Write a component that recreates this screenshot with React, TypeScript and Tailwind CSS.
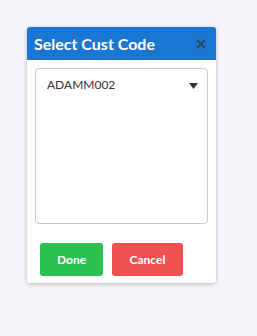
import { X } from "lucide-react";

export default function App() {
  return (
    <div
      className="w-[257px] h-[336px] bg-[#f4f5f9] pt-[27px] pl-[27px]"
      style={{ fontFamily: "Lato, 'Open Sans', sans-serif" }}
    >
      <div className="w-[189px] bg-white rounded-[3px] shadow-[0_1px_4px_rgba(0,0,0,0.25)] overflow-hidden">
        <div className="h-[33px] bg-[#1976d2] flex items-center justify-between pl-[7px] pr-[8px]">
          <span className="text-white font-bold text-[16px] leading-none">Select Cust Code</span>
          <X className="w-[14px] h-[14px] text-[#34465a]" strokeWidth={3.2} />
        </div>
        <div className="px-[8px] pt-[8px]">
          <div className="h-[156px] border border-[#c8c8c8] rounded-[4px] flex items-start justify-between pl-[11px] pr-[9px] pt-[8px]">
            <span className="text-[12px] text-[#333] leading-[16px]">ADAMM002</span>
            <svg width="9" height="7" viewBox="0 0 9 7" className="mt-[6px]">
              <path d="M0 0h9L4.5 6z" fill="#333" />
            </svg>
          </div>
        </div>
        <div className="flex gap-[9px] pl-[13px] pt-[19px] pb-[7px]">
          <button className="w-[63px] h-[33px] bg-[#2bc24f] rounded-[3px] text-white font-bold text-[12px]">
            Done
          </button>
          <button className="w-[71px] h-[33px] bg-[#f05254] rounded-[3px] text-white font-bold text-[12px]">
            Cancel
          </button>
        </div>
      </div>
    </div>
  );
}
